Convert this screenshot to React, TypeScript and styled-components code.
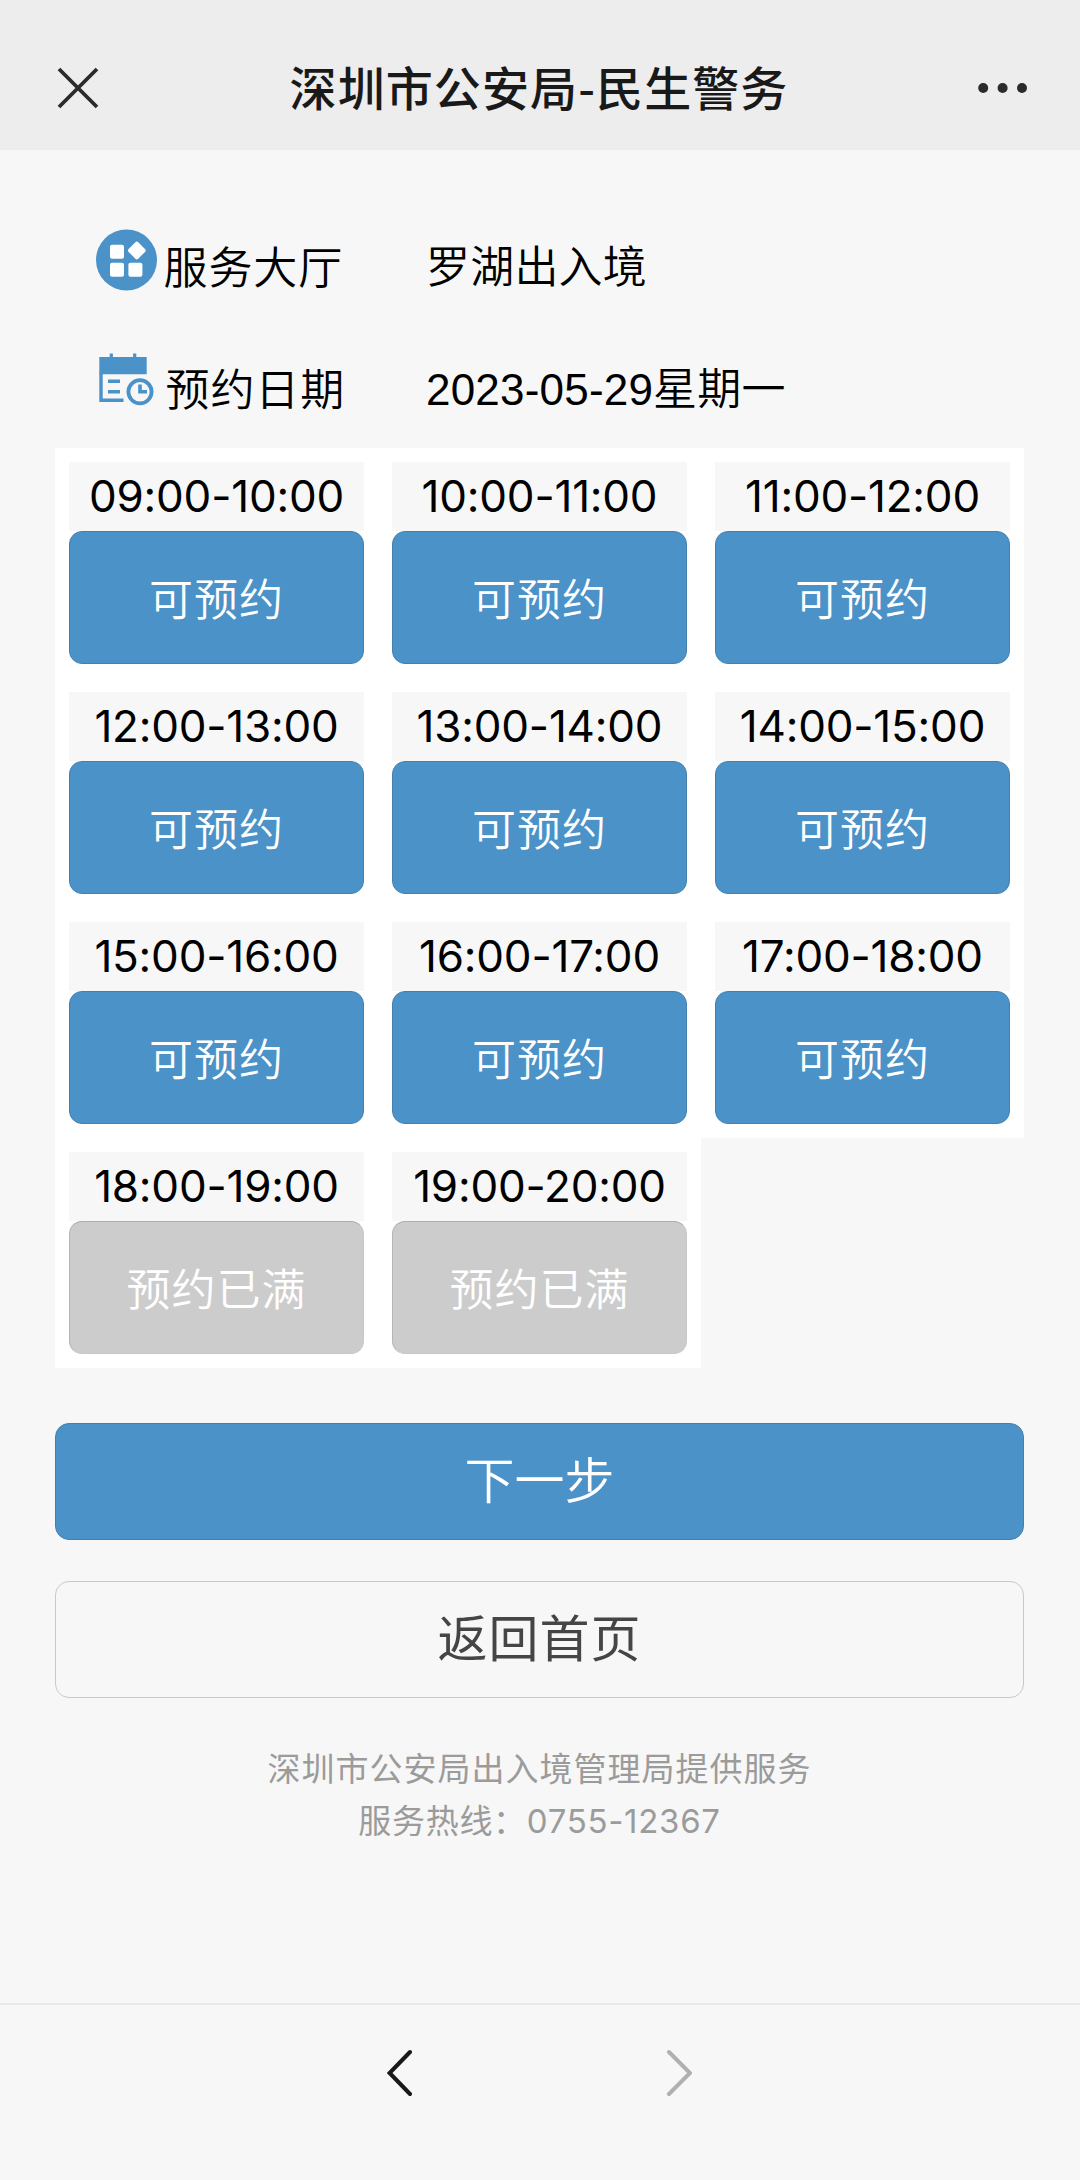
import React from "react";
import styled, { createGlobalStyle } from "styled-components";

const cjk = `"Noto Sans CJK SC", sans-serif`;
const blue = "#4b92c8";

const GlobalStyle = createGlobalStyle`
  * { box-sizing: border-box; }
  body { margin: 0; background: #f7f7f7; }
  button { font: inherit; margin: 0; padding: 0; cursor: pointer; }
`;

const Screen = styled.div`
  display: flex;
  flex-direction: column;
  width: 1080px;
  height: 2180px;
  background: #f7f7f7;
  color: #000;
  font-family: ${cjk};
`;

const Header = styled.header`
  display: flex;
  align-items: center;
  justify-content: space-between;
  height: 150px;
  padding: 26px 52px 0 56px;
  background: #ededed;
`;

const Title = styled.h1`
  margin: 0;
  padding-bottom: 5px;
  font-size: 47px;
  line-height: 60px;
  font-weight: 500;
  letter-spacing: 1.1px;
  color: #191919;
  white-space: nowrap;
`;

const IconButton = styled.button`
  display: flex;
  border: 0;
  background: none;
`;

const Main = styled.main`
  flex: 1;
  padding: 54px 56px 0 55px;
`;

const InfoRow = styled.div`
  display: flex;
  align-items: center;
  height: 122px;
  padding-left: 41px;
`;

const InfoLabel = styled.div<{ $iconLift: number; $gap: number }>`
  display: flex;
  align-items: center;
  gap: ${(p) => p.$gap}px;
  width: 330px;
  font-size: 44px;
  font-weight: 350;
  line-height: 64px;
  letter-spacing: 0.9px;
  white-space: nowrap;

  svg {
    flex: none;
    margin-bottom: ${(p) => p.$iconLift * 2}px;
  }

  span {
    padding-bottom: 1px;
  }
`;

const InfoValue = styled.div`
  padding-top: 5px;
  font-family: "Liberation Sans", ${cjk};
  font-size: 44px;
  font-weight: 350;
  line-height: 64px;
  letter-spacing: 0.2px;
  white-space: nowrap;
`;

const SlotGrid = styled.div`
  display: grid;
  grid-template-columns: repeat(3, 1fr);
`;

const Slot = styled.div`
  height: 230px;
  padding: 14px;
  background: #fff;
`;

const SlotTime = styled.div`
  height: 69px;
  background: #f7f7f7;
  font-family: Inter, sans-serif;
  font-size: 44px;
  line-height: 69px;
  letter-spacing: -0.2px;
  text-align: center;
  white-space: nowrap;
`;

const SlotButton = styled.button<{ $full: boolean }>`
  display: block;
  width: 100%;
  height: 133px;
  padding-bottom: 2px;
  border: 1px solid;
  border-color: ${(p) => (p.$full ? "#adadad #c8c8c8 #c8c8c8 #b5b5b5" : "#4580ad")};
  border-radius: 13px;
  background: ${(p) => (p.$full ? "#ccc" : blue)};
  color: #fff;
  font-size: 44px;
  font-weight: 350;
  letter-spacing: 1px;
  line-height: 64px;
`;

const ActionButton = styled.button<{ $primary?: boolean }>`
  display: block;
  width: 100%;
  height: 117px;
  margin-top: ${(p) => (p.$primary ? 55 : 41)}px;
  padding-bottom: 10px;
  border: 1px solid ${(p) => (p.$primary ? "#4580ad" : "#c9c9c9")};
  border-radius: 14px;
  background: ${(p) => (p.$primary ? blue : "#f7f7f7")};
  color: ${(p) => (p.$primary ? "#fff" : "#454545")};
  font-size: 50px;
  font-weight: ${(p) => (p.$primary ? 350 : 400)};
  letter-spacing: ${(p) => (p.$primary ? 0 : 1)}px;
  line-height: 70px;
`;

const Footer = styled.footer`
  margin-top: 45px;
  font-family: Inter, ${cjk};
  font-size: 33px;
  line-height: 52px;
  text-align: center;
  color: #9b9b9b;
`;

const FooterLine = styled.p<{ $spacing: number }>`
  margin: 0;
  letter-spacing: ${(p) => p.$spacing}px;
`;

const NavBar = styled.nav`
  display: flex;
  justify-content: center;
  gap: 253px;
  height: 177px;
  padding-top: 43px;
  padding-right: 1px;
  border-top: 2px solid #e9e9e9;
`;

const CloseIcon = () => (
  <svg width="44" height="44" viewBox="0 0 44 44" fill="none" stroke="#2b2b2b" strokeWidth="3.8">
    <path d="M3 3L41 41M41 3L3 41" />
  </svg>
);

const MoreIcon = () => (
  <svg width="50" height="12" viewBox="0 0 50 12" fill="#2b2b2b">
    <circle cx="5.2" cy="6" r="5" />
    <circle cx="24.6" cy="6" r="5" />
    <circle cx="44" cy="6" r="5" />
  </svg>
);

const HallIcon = () => (
  <svg width="64" height="64" viewBox="0 0 64 64">
    <circle cx="30.5" cy="31" r="30.5" fill={blue} />
    <g fill="#fff">
      <rect x="14" y="15.8" width="14" height="14" rx="2" />
      <rect x="14" y="33.8" width="14" height="14" rx="2" />
      <rect x="32.4" y="33.8" width="14" height="14" rx="2" />
      <rect x="34" y="14.7" width="13.6" height="13.6" rx="2" transform="rotate(45 40.8 21.5)" />
    </g>
  </svg>
);

const CalendarIcon = () => (
  <svg width="64" height="64" viewBox="0 0 64 64" fill="none" stroke={blue}>
    <path d="M3.3 9H50.7V26.3H3.3Z" fill={blue} stroke="none" />
    <path d="M15.3 5.5V10M38.7 5.5V10" strokeWidth="3.2" />
    <path d="M5 25V52.3H27.5" strokeWidth="3.4" />
    <path d="M12 33.2H24M12 43.8H24" strokeWidth="3.6" />
    <circle cx="44" cy="43.8" r="11.6" strokeWidth="3.8" />
    <path d="M44 36.5V43.8H51" strokeWidth="3.6" />
  </svg>
);

const Chevron = ({ color, flip }: { color: string; flip?: boolean }) => (
  <svg
    width="26"
    height="50"
    viewBox="0 0 26 50"
    fill="none"
    stroke={color}
    strokeWidth="4"
    strokeLinecap="round"
  >
    <path d={flip ? "M3 4L24 25L3 46" : "M23 4L2.6 25L23 46"} />
  </svg>
);

const slots = [
  { time: "09:00-10:00", full: false },
  { time: "10:00-11:00", full: false },
  { time: "11:00-12:00", full: false },
  { time: "12:00-13:00", full: false },
  { time: "13:00-14:00", full: false },
  { time: "14:00-15:00", full: false },
  { time: "15:00-16:00", full: false },
  { time: "16:00-17:00", full: false },
  { time: "17:00-18:00", full: false },
  { time: "18:00-19:00", full: true },
  { time: "19:00-20:00", full: true },
];

export default function App() {
  return (
    <Screen>
      <GlobalStyle />
      <Header>
        <IconButton aria-label="关闭">
          <CloseIcon />
        </IconButton>
        <Title>深圳市公安局-民生警务</Title>
        <IconButton aria-label="更多">
          <MoreIcon />
        </IconButton>
      </Header>
      <Main>
        <InfoRow>
          <InfoLabel $iconLift={4} $gap={3.5}>
            <HallIcon />
            <span>服务大厅</span>
          </InfoLabel>
          <InfoValue>罗湖出入境</InfoValue>
        </InfoRow>
        <InfoRow>
          <InfoLabel $iconLift={7} $gap={5.5}>
            <CalendarIcon />
            <span>预约日期</span>
          </InfoLabel>
          <InfoValue>2023-05-29星期一</InfoValue>
        </InfoRow>
        <SlotGrid>
          {slots.map((slot) => (
            <Slot key={slot.time}>
              <SlotTime>{slot.time}</SlotTime>
              <SlotButton $full={slot.full} disabled={slot.full}>
                {slot.full ? "预约已满" : "可预约"}
              </SlotButton>
            </Slot>
          ))}
        </SlotGrid>
        <ActionButton $primary>下一步</ActionButton>
        <ActionButton>返回首页</ActionButton>
        <Footer>
          <FooterLine $spacing={1}>深圳市公安局出入境管理局提供服务</FooterLine>
          <FooterLine $spacing={0.7}>服务热线：0755-12367</FooterLine>
        </Footer>
      </Main>
      <NavBar>
        <IconButton aria-label="后退">
          <Chevron color="#191919" />
        </IconButton>
        <IconButton aria-label="前进">
          <Chevron color="#b0b0b0" flip />
        </IconButton>
      </NavBar>
    </Screen>
  );
}
